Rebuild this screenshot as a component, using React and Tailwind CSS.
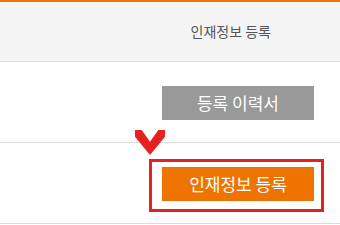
import React from 'react';

// Chevron marker pointing at the register button
function Chevron() {
    return (
        <svg width="30" height="25" viewBox="0 0 30 25" className="block">
            <polygon points="0,0 6.7,0 15,11.7 23.3,0 30,0 30,6.7 15,25 0,6.7" fill="#e52221" />
        </svg>
    );
}

function App() {
    return (
        <div
            className="relative w-[340px] h-[225px] overflow-hidden bg-white"
            style={{ fontFamily: '"Noto Sans CJK KR", "Noto Sans", sans-serif' }}
        >
            {/* Header */}
            <div className="border-t-2 border-[#ef7300] bg-[#f4f4f4] border-b border-b-[#dddddd] h-[62px] flex items-center justify-end pr-[69px]">
                <span className="text-[14px] text-[#555555]">인재정보 등록</span>
            </div>

            {/* History row */}
            <div className="h-[81px] border-b border-[#dddddd] flex justify-end items-start pt-[24px] pr-[26px]">
                <button className="w-[152px] h-[34px] bg-[#999999] text-white text-[17px] flex items-center justify-center">
                    등록 이력서
                </button>
            </div>

            {/* Register row */}
            <div className="h-[81px] border-b border-[#dddddd] flex justify-end items-start pt-[24px] pr-[26px]">
                <button className="w-[152px] h-[34px] bg-[#ef7300] text-white text-[17px] flex items-center justify-center">
                    인재정보 등록
                </button>
            </div>

            {/* Highlight overlay */}
            <div className="absolute left-[135px] top-[130px]">
                <Chevron />
            </div>
            <div className="absolute left-[149px] top-[159px] w-[175px] h-[53px] border-[3px] border-[#e52221]" />
        </div>
    );
}

export default App;
